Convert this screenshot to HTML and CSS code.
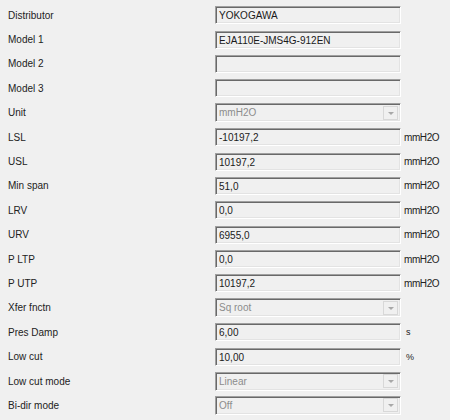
FILE: index.html
```html
<!DOCTYPE html>
<html>
<head>
<meta charset="utf-8">
<link rel="stylesheet" href="styles.css">
</head>
<body>
<div class="form">
  <div class="row"><span class="label">Distributor</span><div class="box">YOKOGAWA</div><span class="unit"></span></div>
  <div class="row"><span class="label">Model 1</span><div class="box">EJA110E-JMS4G-912EN</div><span class="unit"></span></div>
  <div class="row"><span class="label">Model 2</span><div class="box"></div><span class="unit"></span></div>
  <div class="row"><span class="label">Model 3</span><div class="box"></div><span class="unit"></span></div>
  <div class="row"><span class="label">Unit</span><div class="combo"><span class="combo-text">mmH2O</span><span class="arrow"></span></div><span class="unit"></span></div>
  <div class="row"><span class="label">LSL</span><div class="box">-10197,2</div><span class="unit">mmH2O</span></div>
  <div class="row"><span class="label">USL</span><div class="box">10197,2</div><span class="unit">mmH2O</span></div>
  <div class="row"><span class="label">Min span</span><div class="box">51,0</div><span class="unit">mmH2O</span></div>
  <div class="row"><span class="label">LRV</span><div class="box">0,0</div><span class="unit">mmH2O</span></div>
  <div class="row"><span class="label">URV</span><div class="box">6955,0</div><span class="unit">mmH2O</span></div>
  <div class="row"><span class="label">P LTP</span><div class="box">0,0</div><span class="unit">mmH2O</span></div>
  <div class="row"><span class="label">P UTP</span><div class="box">10197,2</div><span class="unit">mmH2O</span></div>
  <div class="row"><span class="label">Xfer fnctn</span><div class="combo"><span class="combo-text">Sq root</span><span class="arrow"></span></div><span class="unit"></span></div>
  <div class="row"><span class="label">Pres Damp</span><div class="box">6,00</div><span class="unit unit-s">s</span></div>
  <div class="row"><span class="label">Low cut</span><div class="box">10,00</div><span class="unit unit-s">%</span></div>
  <div class="row"><span class="label">Low cut mode</span><div class="combo"><span class="combo-text">Linear</span><span class="arrow"></span></div><span class="unit"></span></div>
  <div class="row"><span class="label">Bi-dir mode</span><div class="combo"><span class="combo-text">Off</span><span class="arrow"></span></div><span class="unit"></span></div>
</div>
</body>
</html>
```

FILE: styles.css
```css
html, body {
  margin: 0;
  padding: 0;
  background: #f0f0f0;
}
body {
  font-family: "Liberation Sans", Arial, sans-serif;
  font-size: 10px;
  color: #1a1a1a;
  width: 450px;
  height: 420px;
  overflow: hidden;
}
.form {
  display: flex;
  flex-direction: column;
  padding-top: 3px;
}
.row {
  display: grid;
  grid-template-columns: 207px 186px 1fr;
  align-items: center;
  height: 24.4px;
  padding-left: 8px;
}
.label {
  color: #222;
  white-space: nowrap;
}
.box {
  box-sizing: border-box;
  height: 18px;
  background: #f0f0f0;
  border-top: 1px solid #a0a0a0;
  border-left: 1px solid #a0a0a0;
  border-right: 1px solid #ffffff;
  border-bottom: 1px solid #ffffff;
  box-shadow: inset 1px 1px 0 #696969, inset -1px -1px 0 #e3e3e3;
  padding: 2px 0 0 3px;
  line-height: 13px;
  white-space: nowrap;
  overflow: hidden;
}
.combo {
  box-sizing: border-box;
  height: 19px;
  background: #f0f0f0;
  border-top: 1px solid #a0a0a0;
  border-left: 1px solid #a0a0a0;
  border-right: 1px solid #ffffff;
  border-bottom: 1px solid #ffffff;
  box-shadow: inset 1px 1px 0 #696969, inset -1px -1px 0 #e3e3e3;
  display: flex;
  align-items: center;
  justify-content: space-between;
  padding: 0 2px 0 3px;
}
.combo-text {
  color: #8c8c8c;
}
.arrow {
  box-sizing: border-box;
  width: 15px;
  height: 14px;
  border: 1px solid #d8d8d8;
  background: #f0f0f0;
  position: relative;
}
.arrow::after {
  content: "";
  position: absolute;
  left: 4px;
  top: 5px;
  border-left: 3px solid transparent;
  border-right: 3px solid transparent;
  border-top: 3px solid #a8a8a8;
}
.unit {
  padding-left: 3px;
  color: #222;
  white-space: nowrap;
  letter-spacing: -0.4px;
}
.unit-s {
  padding-left: 5px;
  font-size: 9px;
  letter-spacing: 0;
}
```
